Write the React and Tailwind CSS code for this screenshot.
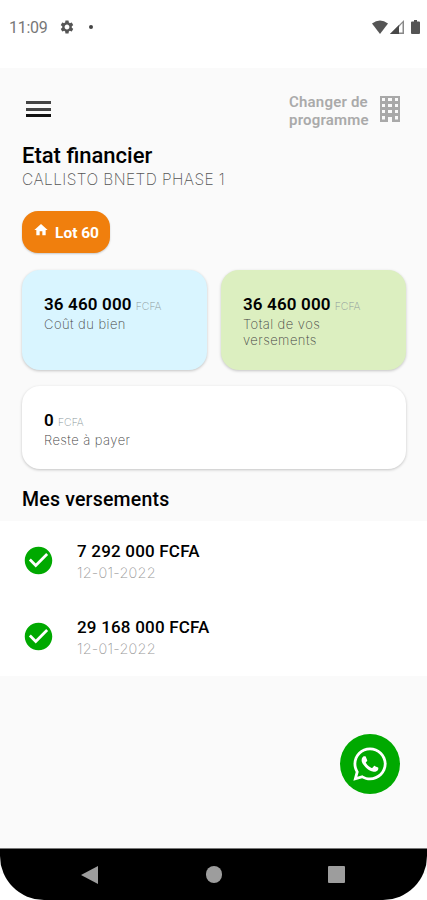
import { MdSettings, MdHome, MdCheckCircle } from "react-icons/md";
import { FaWhatsapp } from "react-icons/fa";

const light = "font-['Inter','Open_Sans',sans-serif] font-extralight";

function StatusBar() {
  return (
    <header className="flex h-[68px] shrink-0 items-start bg-white pl-[9px] pr-[7px] pt-[18px] text-[#555]">
      <span className="w-[39px] whitespace-nowrap text-[16px] leading-5 tracking-[-0.3px] text-[#777]">11:09</span>
      <MdSettings className="ml-[11px] mt-px h-4 w-4" />
      <span className="ml-[14px] mt-[7px] h-1 w-1 rounded-full bg-[#444]" />
      <span className="flex-1" />
      <svg className="mt-[2px] h-[14px] w-4" viewBox="0 0 16 14" fill="currentColor">
        <path d="M0 3.5Q8-2.5 16 3.5L8 14Z" />
      </svg>
      <svg className="ml-[2px] mt-[2px] h-[14px] w-[14px]" viewBox="0 0 14 14">
        <path d="M0 14L14 0V14Z" fill="#888" />
        <path d="M9 7L12.5 3V12.5H9Z" fill="#fff" />
        <path d="M0 14L9 5V14Z" fill="#484848" />
      </svg>
      <svg className="ml-[7px] mt-[2px] h-[14px] w-[9px]" viewBox="0 0 9 14" fill="currentColor">
        <path d="M3 0H6V1.5H8Q9 1.5 9 2.5V13Q9 14 8 14H1Q0 14 0 13V2.5Q0 1.5 1 1.5H3Z" />
      </svg>
    </header>
  );
}

function TopBar() {
  return (
    <div className="flex h-[77px] items-start pl-[26px] pr-[27px]">
      <button className="mt-[33px] flex w-[25px] flex-col gap-[3.5px]" aria-label="Menu">
        <span className="h-[3px] w-full bg-[#444]" />
        <span className="h-[3px] w-full bg-[#444]" />
        <span className="h-[3px] w-full bg-[#111]" />
      </button>
      <div className="ml-auto mt-[25px] w-[82px] whitespace-nowrap text-[15px] font-semibold leading-[18px] tracking-[0.2px] text-[#aaa]">
        Changer de
        <br />
        programme
      </div>
      <svg className="ml-[9px] mt-[28px] h-[26px] w-5" viewBox="0 0 20 26">
        <path
          fill="#a9a9a9"
          fillRule="evenodd"
          d="M0 0H20V26H12V21H8V26H0Z M2 2V5H5V2Z M8 2V5H12V2Z M15 2V5H18V2Z M2 8V11H5V8Z M8 8V11H12V8Z M15 8V11H18V8Z M2 14V17H5V14Z M8 14V17H12V14Z M15 14V17H18V14Z M2 20V23.5H5V20Z M15 20V23.5H18V20Z"
        />
      </svg>
    </div>
  );
}

function AmountCard({ amount, label, className }) {
  return (
    <section className={`rounded-[18px] pl-[22px] pt-[24px] shadow-[0_1px_3px_rgba(0,0,0,0.22)] ${className}`}>
      <div className="flex items-baseline whitespace-nowrap leading-[20px]">
        <span className="text-[17px] font-semibold tracking-[0.15px] text-black">{amount}</span>
        <span className={`ml-[4px] text-[10.5px] text-[#8c999b] ${light}`}>FCFA</span>
      </div>
      <p className={`w-[110px] text-[13px] leading-[15.5px] tracking-[0.45px] text-[#444] ${light}`}>{label}</p>
    </section>
  );
}

function Payment({ amount, date }) {
  return (
    <li className="flex h-[76px] items-start pl-[22px]">
      <MdCheckCircle className="mt-[23px] h-[33px] w-[33px] text-[#00a900]" />
      <div className="ml-[22px] mt-[19px]">
        <div className="text-[17px] font-medium leading-[22px] tracking-[0.2px] text-black">{amount}</div>
        <div className={`mt-px text-[14.5px] leading-5 tracking-[0.2px] text-[#999] ${light}`}>{date}</div>
      </div>
    </li>
  );
}

export default function App() {
  return (
    <div className="flex h-[900px] w-[427px] flex-col overflow-hidden bg-white font-[Roboto,sans-serif]">
      <StatusBar />
      <main className="flex flex-1 flex-col bg-[#fafafa]">
        <TopBar />
        <h1 className="pl-[22px] text-[22px] font-medium leading-[22px] text-black">Etat financier</h1>
        <p className={`pl-[22px] text-[15.5px] leading-[26px] tracking-[0.42px] text-[#555] ${light}`}>CALLISTO BNETD PHASE 1</p>
        <div className="ml-[22px] mt-[18px] flex h-[42px] w-[88px] items-center rounded-[16px] bg-[#f07f0d] pl-[11px] text-white shadow-[0_1px_2px_rgba(0,0,0,0.2)]">
          <MdHome className="-mt-[5px] h-4 w-4" />
          <span className="ml-[6px] mt-[4px] whitespace-nowrap text-[15.5px] font-bold">Lot 60</span>
        </div>
        <div className="ml-[22px] mr-[21px] mt-[17px] grid grid-cols-[185px_185px] justify-between">
          <AmountCard amount="36 460 000" label="Coût du bien" className="h-[100px] bg-[#d9f5ff]" />
          <AmountCard amount="36 460 000" label="Total de vos versements" className="h-[100px] bg-[#dcefc0]" />
        </div>
        <AmountCard amount="0" label="Reste à payer" className="ml-[22px] mr-[21px] mt-[16px] h-[83px] bg-white" />
        <h2 className="mt-[18px] pl-[22px] text-[19.5px] font-medium leading-[26px] tracking-[0.2px] text-black">Mes versements</h2>
        <ul className="mt-[8px] h-[155px] bg-white">
          <Payment amount="7 292 000 FCFA" date="12-01-2022" />
          <Payment amount="29 168 000 FCFA" date="12-01-2022" />
        </ul>
        <button className="ml-auto mr-[27px] mt-[58px] flex h-[60px] w-[60px] items-center justify-center rounded-full bg-[#00a900] text-white" aria-label="WhatsApp">
          <FaWhatsapp className="h-[38px] w-[38px]" />
        </button>
      </main>
      <div className="h-[52px] shrink-0 bg-[linear-gradient(#fafafa_50%,#fff_50%)]">
        <nav className="flex h-full items-start rounded-b-[44px] border-t border-[#777] bg-black pl-[81px] pt-[17px]">
          <svg className="h-[18px] w-[17px]" viewBox="0 0 17 18" fill="#9d9d9d">
            <path d="M0 9L17 0V18Z" />
          </svg>
          <span className="ml-[108px] h-[17px] w-4 rounded-full bg-[#9d9d9d]" />
          <span className="ml-[106px] h-[17px] w-[17px] rounded-[1px] bg-[#9d9d9d]" />
        </nav>
      </div>
    </div>
  );
}
